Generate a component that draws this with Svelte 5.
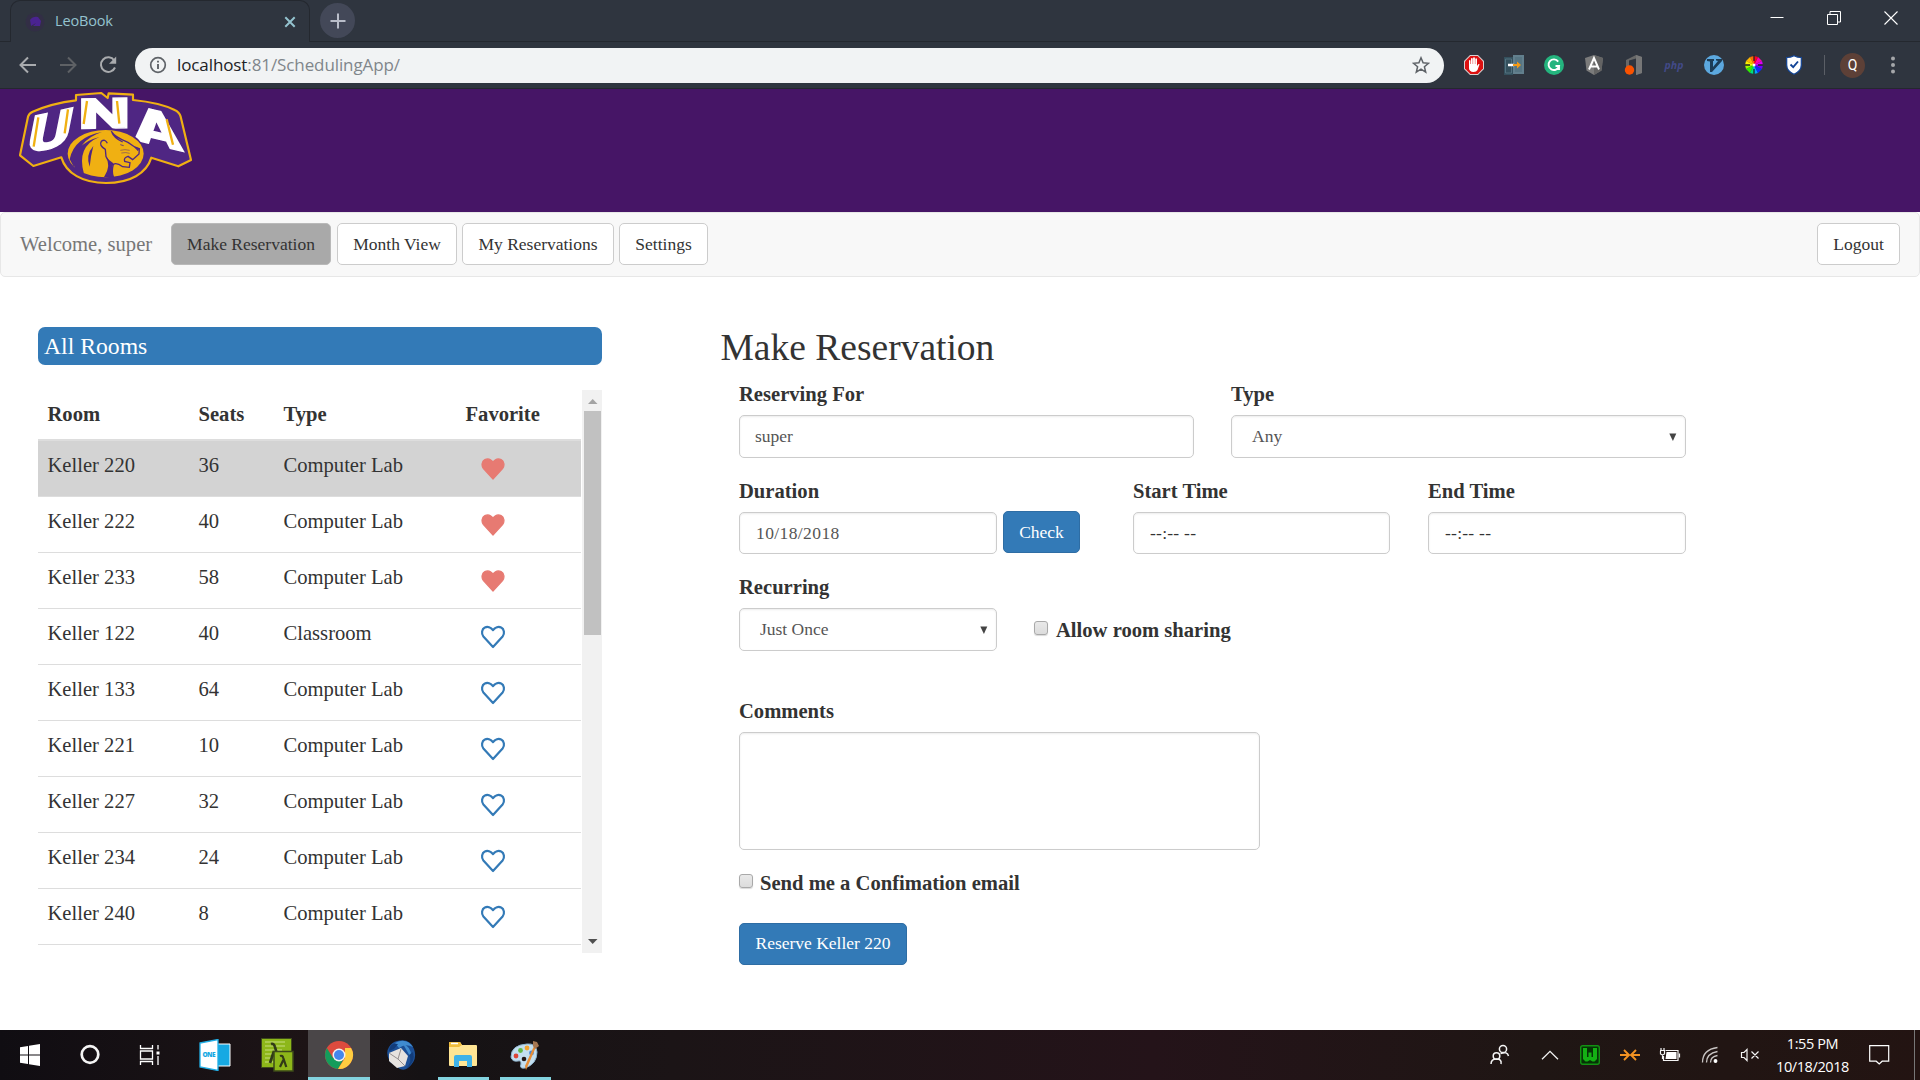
<script>
  const rooms = [
    { name: 'Keller 220', seats: 36, type: 'Computer Lab', fav: true },
    { name: 'Keller 222', seats: 40, type: 'Computer Lab', fav: true },
    { name: 'Keller 233', seats: 58, type: 'Computer Lab', fav: true },
    { name: 'Keller 122', seats: 40, type: 'Classroom', fav: false },
    { name: 'Keller 133', seats: 64, type: 'Computer Lab', fav: false },
    { name: 'Keller 221', seats: 10, type: 'Computer Lab', fav: false },
    { name: 'Keller 227', seats: 32, type: 'Computer Lab', fav: false },
    { name: 'Keller 234', seats: 24, type: 'Computer Lab', fav: false },
    { name: 'Keller 240', seats: 8, type: 'Computer Lab', fav: false }
  ];
  let selected = $state('Keller 220');
</script>

<div class="screen">
  <div class="tabstrip">
    <div class="tab">
      <svg class="favicon" width="20" height="20" viewBox="0 0 20 20"><circle cx="10" cy="10" r="9.500" fill="#37264f" opacity=".4"/><path d="M5 8q3-4 8-3l3 4-1 5H8l3-3-5 3z" fill="#4a2391"/></svg>
      <span class="tabtitle">LeoBook</span>
      <svg class="tabclose" width="12" height="12" viewBox="0 0 12 12"><path d="M1.300 1.300l9.400 9.400M10.700 1.300l-9.400 9.400" stroke="#94c3cf" stroke-width="2"/></svg>
    </div>
    <div class="newtab"><svg width="16" height="16" viewBox="0 0 16 16"><path d="M8 .5v15M.5 8h15" stroke="#b9bdc9" stroke-width="2"/></svg></div>
    <div class="winctl">
      <svg width="14" height="14" viewBox="0 0 14 14"><path d="M.5 6.500h13" stroke="#fff"/></svg>
      <svg width="14" height="14" viewBox="0 0 14 14"><path d="M.5 3.500h10v10h-10zM3 3V.5h10.500v10.500H11" fill="none" stroke="#fff"/></svg>
      <svg width="14" height="14" viewBox="0 0 14 14"><path d="M.5.5l13 13M13.500.5l-13 13" stroke="#fff" stroke-width="1.100"/></svg>
    </div>
  </div>

  <div class="toolbar">
    <div class="navbtn"><svg width="18" height="18" viewBox="0 0 18 18"><path d="M17 9H2M9 1.500L1.500 9l7.500 7.500" fill="none" stroke="#a9abae" stroke-width="2"/></svg></div>
    <div class="navbtn"><svg width="18" height="18" viewBox="0 0 18 18"><path d="M1 9h15M9 1.500L16.500 9 9 16.500" fill="none" stroke="#5e6165" stroke-width="2"/></svg></div>
    <div class="navbtn"><svg width="18" height="18" viewBox="0 0 18 18"><path d="M15.300 4.500A7.300 7.300 0 1 0 16 11.500" fill="none" stroke="#a9abae" stroke-width="2"/><path d="M17.200.5v7.200H10z" fill="#a9abae"/></svg></div>
    <div class="omnibox">
      <svg width="18" height="18" viewBox="0 0 18 18"><circle cx="9" cy="9" r="7.300" fill="none" stroke="#5f6368" stroke-width="1.700"/><path d="M9 8v5M9 4.800v1.800" stroke="#5f6368" stroke-width="1.900"/></svg>
      <span class="url">localhost<i>:81/SchedulingApp/</i></span>
      <svg class="star" width="18" height="18" viewBox="0 0 18 18"><path d="M9 1.800l2.100 5 5.400.5-4.100 3.500 1.300 5.300L9 13.200l-4.700 2.900 1.300-5.300L1.500 7.300l5.400-.5z" fill="none" stroke="#5f6368" stroke-width="1.500"/></svg>
    </div>
    <div class="exts">
      <svg width="20" height="20" viewBox="0 0 20 20"><path d="M6 0h8l6 6v8l-6 6H6l-6-6V6z" fill="#d9d0d0"/><path d="M6.400 1h7.200L19 6.400v7.200L13.600 19H6.400L1 13.600V6.400z" fill="#dc1010"/><path d="M5 10.500V5.500q.8-.8 1.500 0V9h.5V3.500q.8-1 1.700 0V9h.4V2.800q1-1 1.800 0V9h.4V3.700q.9-.9 1.700 0V11l1.500-2q1.200-.3 1 .6L13.500 15Q12.500 17 9.500 17 5 16.700 5 13z" fill="#fff"/></svg>
      <svg width="20" height="20" viewBox="0 0 20 20"><path d="M0 2h9v18H0z" fill="#34505d"/><path d="M1.500 4h6v14h-6z" fill="none" stroke="#52707f"/><path d="M9 0h11v19H9z" fill="#627f8d"/><path d="M11 2h7v15h-7z" fill="#577583"/><path d="M4 10h6" stroke="#fff" stroke-width="2.500"/><path d="M9 9h4V6.500l4 3.500-4 3.500V11H9z" fill="#f39a15"/></svg>
      <svg width="20" height="20" viewBox="0 0 20 20"><circle cx="10" cy="10" r="10" fill="#24b47e"/><path d="M14.200 6.600A5.300 5.300 0 1 0 15 11h-3.500M15 11v4" fill="none" stroke="#fff" stroke-width="1.900"/></svg>
      <svg width="20" height="20" viewBox="0 0 20 20"><path d="M10 0l9 3-1.500 12.500L10 20l-7.500-4.500L1 3z" fill="#7b7b7b"/><path d="M10 0l9 3-1.500 12.500L10 20z" fill="#646464"/><path d="M5 14.500L10 3l5 11.500M6.500 11.500h7" fill="none" stroke="#fff" stroke-width="1.900"/></svg>
      <svg width="20" height="20" viewBox="0 0 20 20"><path d="M2 5l10-5 6 2v16l-6 2V3.500L5 5.500V13H2z" fill="#686868"/><path d="M12 0l6 2v16l-6 2z" fill="#777"/><circle cx="5.500" cy="15" r="4.700" fill="#fa5200"/></svg>
      <span class="php">php</span>
      <svg width="20" height="20" viewBox="0 0 20 20"><circle cx="10" cy="10" r="10" fill="#5ca8df"/><path d="M3 4h7v2L9 6v6l5-6-2-.5V4h6v2L8 17H6V6.500L3 6z" fill="#1c3c56"/></svg>
      <svg width="20" height="20" viewBox="0 0 20 20"><g><path d="M10 10L6 2 10 1z" fill="#ff6b00"/><path d="M10 10L2 6 6 2z" fill="#ffb500"/><path d="M10 10L1 10 2 6z" fill="#fff000"/><path d="M10 10L2 14 1 10z" fill="#a5f500"/><path d="M10 10L6 18 2 14z" fill="#30ed00"/><path d="M10 10L10 19 6 18z" fill="#00e080"/><path d="M10 10L14 18 10 19z" fill="#00a8ff"/><path d="M10 10L18 14 14 18z" fill="#102bff"/><path d="M10 10L19 10 18 14z" fill="#7500ff"/><path d="M10 10L18 6 19 10z" fill="#d900f5"/><path d="M10 10L14 2 18 6z" fill="#ff00b0"/><path d="M10 10L10 1 14 2z" fill="#ff0020"/></g><path d="M10 0v6M10 14v5M1 10h5M14 10h5" stroke="#222" stroke-width="1.300"/><circle cx="10" cy="10" r="1.500" fill="#fff"/></svg>
      <svg width="20" height="20" viewBox="0 0 20 20"><path d="M10 .7q4 2 7.300 1.800V10q0 6-7.300 9.300Q2.700 16 2.700 10V2.500Q6 2.700 10 .7z" fill="#fff" stroke="#124496" stroke-width="1.200"/><path d="M6.500 9.500l2.700 2.700 4.800-5.700" fill="none" stroke="#124496" stroke-width="1.900"/></svg>
    </div>
    <div class="divider"></div>
    <div class="avatar">Q</div>
    <svg class="dots" width="6" height="18" viewBox="0 0 6 18" fill="#a5a7aa"><circle cx="3" cy="2.500" r="2"/><circle cx="3" cy="9" r="2"/><circle cx="3" cy="15.500" r="2"/></svg>
  </div>

  <header class="banner">
    <svg width="180" height="96" viewBox="54 270 540 288">
      <path d="M228 285L304 279L323 294L326 280L399 284V300Q480 308 524 330Q538 336 542 350L573 480L535 499L454 473C440 520 390 549 318 549C248 549 198 520 184 472L100 498L60 466L84 350Q87 340 98 335Q155 310 228 301Z" fill="#4f2683" stroke="#f0b012" stroke-width="6.500" stroke-linejoin="round"/>
      <g class="lettering">
        <text transform="matrix(1 -.22 -.2 1 74 462)" font-size="158" textLength="132" lengthAdjust="spacingAndGlyphs">U</text>
        <text transform="matrix(1 -.02 0 1 235 386)" font-size="126" textLength="156" lengthAdjust="spacingAndGlyphs">N</text>
        <text transform="matrix(1 .24 .12 1 406 420)" font-size="150" textLength="144" lengthAdjust="spacingAndGlyphs">A</text>
      </g>
      <path d="M115 352L101 440M204 328L194 400M261 303L251 372M351 303L358 371M500 358L519 434" fill="none" stroke="#f0b012" stroke-width="7"/>
      <ellipse cx="316" cy="462" rx="120" ry="78" fill="#4f2683"/>
      <ellipse cx="317" cy="461" rx="114" ry="71" fill="#f0b012"/>
      <path d="M209 478Q222 412 306 396Q230 420 222 502ZM223 508Q217 430 298 411Q228 440 252 522ZM269 500Q256 465 280 438Q272 468 269 500Z" fill="#4f2683"/>
      <path d="M322 430Q315 415 304 424Q296 436 316 448L318 470Q337 495 315 530H340Q334 515 340 493Q350 487 368 500L388 502L390 488L374 484Q370 473 384 469L398 479L407 471L417 462L418 446L404 441L384 427Q344 411 334 394Q342 415 368 426" fill="#f0b012" stroke="#4f2683" stroke-width="4"/>
      <path d="M318 470Q336 492 316 530H340Q333 513 340 490Q326 480 318 470Z" fill="#4f2683"/>
      <path d="M361 434l10 3M404 442l12 4-2 6z" fill="#4f2683" stroke="#4f2683" stroke-width="2.500"/>
      <path d="M361 451q14-4 28 0M364 459q14-3 25 1" fill="none" stroke="#4f2683" stroke-width="1.500"/>
    </svg>
  </header>

  <nav class="appnav">
    <span class="welcome">Welcome, super</span>
    <button class="btn active w1">Make Reservation</button>
    <button class="btn w2">Month View</button>
    <button class="btn w3">My Reservations</button>
    <button class="btn w4">Settings</button>
    <button class="btn logout">Logout</button>
  </nav>

  <main>
    <section class="rooms">
      <h3>All Rooms</h3>
      <div class="scroller">
        <div class="table">
          <div class="tr head"><span>Room</span><span>Seats</span><span>Type</span><span>Favorite</span></div>
          {#each rooms as r}
            <!-- svelte-ignore a11y_click_events_have_key_events, a11y_no_static_element_interactions -->
            <div class="tr" class:sel={selected === r.name} onclick={() => (selected = r.name)}>
              <span>{r.name}</span><span>{r.seats}</span><span>{r.type}</span>
              <span class="fav">
                <svg width="26" height="24" viewBox="0 0 26 24">
                  <path class:full={r.fav} d="M13 22L3.400 11.500C1 8.600 1.900 4 4.800 2.600C7.500 1.200 10.900 2.200 13 5.200C15.100 2.200 18.500 1.200 21.200 2.600C24.100 4 25 8.600 22.600 11.500Z" />
                </svg>
              </span>
            </div>
          {/each}
        </div>
        <div class="sbar">
          <svg width="20" height="21" viewBox="0 0 20 21"><path d="M6 14h9.500L10.700 9z" fill="#a3a3a3"/></svg>
          <div class="thumb"></div>
          <svg width="20" height="21" viewBox="0 0 20 21"><path d="M6 7h9.500L10.700 12z" fill="#505050"/></svg>
        </div>
      </div>
    </section>

    <section class="form">
      <h2>Make Reservation</h2>
      <div class="row r1">
        <div class="field wide"><b>Reserving For</b><div class="input">super</div></div>
        <div class="field wide"><b>Type</b><div class="input select">Any<svg width="8" height="8" viewBox="0 0 8 8"><path d="M.3.500h7L3.900 8z" fill="#444"/></svg></div></div>
      </div>
      <div class="row r2">
        <div class="field"><b>Duration</b><div class="input date">10/18/2018</div></div>
        <button class="btn primary check">Check</button>
        <div class="field start"><b>Start Time</b><div class="input time">--:-- --</div></div>
        <div class="field end"><b>End Time</b><div class="input time">--:-- --</div></div>
      </div>
      <div class="row r3">
        <div class="field"><b>Recurring</b><div class="input select once">Just Once<svg width="8" height="8" viewBox="0 0 8 8"><path d="M.3.500h7L3.900 8z" fill="#444"/></svg></div></div>
        <div class="checkline share"><i class="cb"></i><b>Allow room sharing</b></div>
      </div>
      <div class="field comments"><b>Comments</b><div class="area"></div></div>
      <div class="checkline mail"><i class="cb"></i><b>Send me a Confimation email</b></div>
      <button class="btn primary reserve">Reserve {selected}</button>
    </section>
  </main>

  <footer class="taskbar">
    <div class="sys"><svg width="20" height="22" viewBox="0 0 20 22" fill="#fff"><path d="M0 3.200L8 2v8.500H0zM9 1.800L20 0v10.500H9zM0 11.500h8V20l-8-1.200zM9 11.500h11V22L9 20.200z"/></svg></div>
    <div class="sys"><svg width="20" height="22" viewBox="0 0 20 22"><circle cx="10" cy="10.500" r="8.300" fill="none" stroke="#f4f4f4" stroke-width="2.700"/></svg></div>
    <div class="sys"><svg width="22" height="22" viewBox="0 0 22 22" fill="none" stroke="#fff" stroke-width="1.300"><path d="M1.500 1v3.500h12V1M1.500 21v-3.500h12V21M1.500 7h12v8h-12zM19 1v4.500M19 12v9"/><path d="M17.500 7.500h3v3h-3z" fill="#fff" stroke="none"/></svg></div>
    <div class="app first"><svg width="32" height="32" viewBox="0 0 32 32"><path d="M17 5h14v22H17z" fill="#16a9e3" stroke="#fff"/><path d="M1 4L19 .5v31L1 28z" fill="#fff" stroke="#20aee6" stroke-width="1.300"/><text x="3.500" y="18.300" font-family="Open Sans, sans-serif" font-size="6.500" font-weight="800" fill="#16a9e3" textLength="13">ONE</text></svg></div>
    <div class="app"><svg width="34" height="34" viewBox="0 0 34 34"><path d="M1.500.5h30v29h-30z" fill="#8db719" stroke="#3d4a1a"/><path d="M5 4h20M5 8h20M5 12h17M5 16h16M5 20h15M5 24h12" stroke="#b4d25d" stroke-width="1.300"/><path d="M11 6q3-1 4 3l2.500 9M14 13l-4 12" fill="none" stroke="#303a17" stroke-width="2.700"/><path d="M14 13.500h19V33H14z" fill="#8db719" stroke="#3d4a1a" stroke-width="1.500"/><path d="M20 18q2.500-1 3.300 2l3 9M23.300 22L20 29" fill="none" stroke="#303a17" stroke-width="2.200"/></svg></div>
    <div class="app current"><svg width="30" height="30" viewBox="0 0 30 30"><circle cx="15" cy="15" r="14" fill="#dd4b3e"/><path d="M2.900 8A14 14 0 0 0 14 29l6-10.500L15 15 9 18z" fill="#149c5b"/><path d="M27.100 8A14 14 0 0 1 14 29l7-11V8z" fill="#ffcd40"/><circle cx="15" cy="15" r="6.500" fill="#f3f3f3"/><circle cx="15" cy="15" r="5" fill="#4587ed"/></svg></div>
    <div class="app"><svg width="32" height="32" viewBox="0 0 32 32"><path d="M12 2Q25-1 29 10t-6 19q-4 3-8 1L5 23Q0 14 4 8 7 3 12 2z" fill="#1b4f96"/><path d="M10 4Q21-2 28 8 20 4 14 9zM18 5q9 3 8 14" fill="#3f8bd0"/><path d="M4 14L16 9l7 8-3 10-8 2-8-7z" fill="#e6e3df"/><path d="M4 14l9 6 3-10M13 20l7 7" fill="none" stroke="#948f90"/><path d="M4 12Q5 3 13 5L9 10M24 16q4 6-3 14 10-7 7-17" fill="#123c7a"/></svg></div>
    <div class="app running"><svg width="30" height="28" viewBox="0 0 30 28"><path d="M1 2q0-1 1-1h10l2 3h14q1 0 1 1v19q0 1-1 1H2q-1 0-1-1z" fill="#ffe594"/><path d="M1 2q0-1 1-1h10l2 3-3 2H1z" fill="#f0bd3c"/><path d="M3 2.500h7" stroke="#fff" stroke-width="1.500"/><path d="M6 26V16q0-2 2-2h14q2 0 2 2v10h-5v-6h-8v6z" fill="#3fb2e8"/></svg></div>
    <div class="app running"><svg width="30" height="32" viewBox="0 0 30 32"><path d="M17 5Q26 4 27 13 27 25 15 29q-6 1-4-4 0-4-3-3-6 1-7-4Q1 6 17 5z" fill="#c3dff0" stroke="#8fb5ce"/><circle cx="14" cy="20" r="2.300" fill="#241715"/><circle cx="6" cy="17" r="2.400" fill="#dd4638"/><circle cx="10.500" cy="11.500" r="2.400" fill="#62b945"/><circle cx="17" cy="9" r="2.400" fill="#f3a431"/><circle cx="21.500" cy="14" r="2.400" fill="#4b87d6"/><path d="M24 7l2 1-10 23-1-4z" fill="#e78e37"/><path d="M23 2l4 1 2 4-4 3-2-3z" fill="#a57752"/></svg></div>

    <div class="tray">
      <div class="cell"><svg width="20" height="22" viewBox="0 0 20 22" fill="none" stroke="#f4f4f4" stroke-width="1.500"><circle cx="13" cy="5" r="3.600"/><circle cx="6.500" cy="12" r="3.300"/><path d="M1 20q0-5 5.500-5t4.500 5M10.500 9.500q7-2.500 8 2.500"/></svg></div>
      <div class="gap10"></div>
      <div class="cell"><svg width="18" height="10" viewBox="0 0 18 10"><path d="M1 9.300L9 1.300l8 8" fill="none" stroke="#f4f4f4" stroke-width="1.300"/></svg></div>
      <div class="cell"><svg width="20" height="20" viewBox="0 0 20 20"><rect x=".7" y=".7" width="18.600" height="18.600" rx="2" fill="#063306" stroke="#139113" stroke-width="1.400"/><path d="M3 3h4v9h1.500V7.500h3V12H13V3h4v11l-2.500 2.500h-2L10 15l-2.500 1.500h-2L3 14z" fill="#14b014"/></svg></div>
      <div class="cell"><svg width="20" height="14" viewBox="0 0 20 14"><path d="M0 7h9M11 7h9M4 2l5 5-5 5M16 2l-5 5 5 5" fill="none" stroke="#f39222" stroke-width="1.900"/></svg></div>
      <div class="cell"><svg width="22" height="16" viewBox="0 0 22 16"><path d="M6.500 3.500H19v10H4.500V9M20.500 6.500v4" fill="none" stroke="#f4f4f4" stroke-width="1.200"/><path d="M7.500 5h10v7H6.500z" fill="#fff"/><path d="M1 3.500h5M2 1v2M5 1v2M1.500 4v3l2 1 2-1V4M3.500 8v4" fill="none" stroke="#f4f4f4" stroke-width="1.200"/></svg></div>
      <div class="cell"><svg width="18" height="18" viewBox="0 0 18 18" fill="none" stroke="#c9c5c4" stroke-width="1.300"><path d="M1.500 16.500q0-13 15-15M5.500 16.500q0-9 11-11M9.500 16.500q0-6 7-7"/><circle cx="14.500" cy="15" r="1.300" fill="#fff" stroke="#fff"/></svg></div>
      <div class="cell mute"><svg width="20" height="14" viewBox="0 0 20 14" fill="none" stroke="#f4f4f4" stroke-width="1.200"><path d="M1.500 4.500H4L7 1.500v11L4 9.500H1.500zM11.500 3.500l7 7M18.500 3.500l-7 7"/></svg></div>
      <div class="clock"><span class="t">1:55 PM</span><span class="d">10/18/2018</span></div>
      <svg class="note" width="21" height="20" viewBox="0 0 21 20"><path d="M.7.700h19v15.500h-6.500L10.200 19l-3-2.800H.7z" fill="none" stroke="#fff" stroke-width="1.200"/></svg>
    </div>
    <div class="peek"></div>
  </footer>
</div>

<style>
  :global(body) { margin: 0; background: #fff; }
  :global(*) { box-sizing: border-box; }
  .screen { width: 1920px; height: 1080px; overflow: hidden; display: flex; flex-direction: column; background: #fff; color: #333; font-family: "Liberation Serif", "Times New Roman", serif; white-space: nowrap; }
  svg { display: block; flex: none; }

  .tabstrip { height: 42px; background: #2f353f; border-bottom: 1px solid #24282f; display: flex; flex: none; }
  .tab { width: 300px; margin-left: 10px; height: 42px; border: 1px solid #24282f; border-bottom: 0; border-radius: 10px 10px 0 0; background: #2f353f; display: flex; align-items: center; padding: 0 13px 0 14px; }
  .tabtitle { font: 14.5px/20px "Open Sans", sans-serif; color: #94c3cf; margin: -2px 0 0 10px; letter-spacing: -.15px; flex: 1; }
  .newtab { width: 35px; height: 35px; margin: 3px 0 0 10px; border-radius: 50%; background: #434858; display: flex; align-items: center; justify-content: center; }
  .winctl { margin-left: auto; display: flex; gap: 43px; padding: 11px 22px 0 0; }

  .toolbar { height: 47px; background: #2f353f; border-bottom: 1px solid #24282f; display: flex; align-items: center; padding-left: 8px; flex: none; }
  .navbtn { width: 40px; display: flex; justify-content: center; }
  .omnibox { margin-left: 7px; width: 1309px; height: 35px; border-radius: 18px; background: #f1f3f4; display: flex; align-items: center; padding: 0 14px; }
  .url { font: 17px/24px "Open Sans", sans-serif; color: #202124; margin: -1px 0 0 10px; letter-spacing: -.1px; }
  .url i { font-style: normal; color: #80868b; }
  .star { margin-left: auto; }
  .exts { display: flex; align-items: center; gap: 20px; margin-left: 20px; }
  .php { width: 20px; font: italic 700 10.500px/20px "Open Sans", sans-serif; color: #424a88; text-align: center; }
  .divider { width: 1px; height: 20px; background: #5b5f66; margin-left: 20px; }
  .avatar { width: 25px; height: 25px; border-radius: 50%; background: #5d4037; color: #fff; font: 14px/25px Roboto, sans-serif; text-align: center; margin-left: 15px; }
  .dots { margin-left: 25px; }

  .banner { height: 123px; background: #461566; padding: 1px 0 0 18px; flex: none; }
  .lettering { font-family: Roboto, "Liberation Sans", sans-serif; font-weight: 900; fill: #fff; stroke: #fff; stroke-width: 4; }

  .appnav { height: 65px; border: 1px solid #e7e7e7; border-radius: 5px; background: #f8f8f8; display: flex; align-items: flex-start; padding: 10px 19px 0; flex: none; }
  .welcome { font-size: 20.6px; line-height: 43px; color: #777; width: 151px; }
  .btn { height: 42px; border: 1px solid #ccc; border-radius: 5px; background: #fff; color: #333; font: 17.5px/25px "Liberation Serif", serif; padding: 0; flex: none; }
  .active { background: #a9a9a9; border-color: #b9b9b9; }
  .w1 { width: 160px; }
  .w2 { width: 120px; margin-left: 6px; }
  .w3 { width: 152px; margin-left: 5px; }
  .w4 { width: 89px; margin-left: 5px; }
  .logout { width: 83px; margin-left: auto; }
  .primary { background: #337ab7; border-color: #2e6da4; color: #fff; }

  main { flex: 1; display: flex; padding: 50px 0 0 38px; }
  .rooms { width: 564px; flex: none; }
  .rooms h3 { margin: 0 0 25px; height: 38px; border-radius: 7px; background: #337ab7; color: #fff; font-size: 23.7px; line-height: 38px; font-weight: 400; padding-left: 6px; }
  .scroller { display: flex; justify-content: space-between; height: 563px; }
  .table { width: 543px; font-size: 20.6px; line-height: 29px; }
  .tr { display: grid; grid-template-columns: 151px 85px 182px 1fr; padding: 10px 0 0 9.500px; height: 56px; border-bottom: 1px solid #ddd; }
  .head { height: 51px; border-bottom-width: 2px; font-weight: 700; }
  .sel { background: #d3d3d3; }
  .fav { padding: 6px 0 0 14.500px; }
  .fav path { fill: none; stroke: #337ab7; stroke-width: 2.200; stroke-linejoin: round; }
  .fav path.full { fill: #e77a72; stroke: #e77a72; stroke-width: 1.200; }
  .sbar { width: 20px; background: #f1f1f1; display: flex; flex-direction: column; }
  .thumb { width: 17px; height: 224px; background: #c1c1c1; margin: 0 0 auto 2px; }

  .form { margin-left: 118.500px; width: 966px; }
  h2 { margin: 0 0 12px; font-size: 37.5px; line-height: 41px; font-weight: 400; }
  .row { display: flex; margin-left: 18.500px; }
  .field { width: 258px; flex: none; }
  .wide { width: 455px; }
  .r1 { gap: 37px; height: 96px; }
  .r2 { height: 97px; align-items: flex-start; }
  .r2 b { padding-top: 1px; line-height: 28px; }
  .r3 { height: 124px; }
  b { display: block; font-size: 20.6px; line-height: 29px; font-weight: 700; }
  .input { margin-top: 6px; height: 43px; border: 1px solid #ccc; border-radius: 5px; box-shadow: inset 0 1px 2px rgba(0,0,0,.08); color: #555; font-size: 17.5px; line-height: 41px; padding: 0 15px; display: flex; align-items: center; }
  .select { padding: 0 8px 0 20px; justify-content: space-between; }
  .once { padding-left: 20px; }
  .date { height: 42px; margin-top: 7px; padding-left: 16px; letter-spacing: .4px; }
  .time { height: 42px; margin-top: 7px; padding-left: 16px; color: #333; letter-spacing: .25px; }
  .check { width: 77px; margin: 35px 53px 0 6px; }
  .start { width: 257px; }
  .end { margin-left: 38px; }
  .checkline { display: flex; }
  .cb { width: 14px; height: 14px; border: 1px solid #a9a9a9; border-radius: 3px; background: linear-gradient(#e9e9e9, #dcdcdc); box-shadow: 0 1px 1px rgba(0,0,0,.15); flex: none; margin-top: 6px; }
  .share { margin: 42px 0 0 37px; }
  .share b { margin: 1px 0 0 8px; }
  .comments { margin-left: 18.500px; }
  .area { width: 521px; height: 118px; margin-top: 6px; border: 1px solid #ccc; border-radius: 5px; box-shadow: inset 0 1px 2px rgba(0,0,0,.08); }
  .mail { margin: 18px 0 0 18.500px; }
  .mail b { margin: 1px 0 0 7px; }
  .reserve { display: block; width: 168px; margin: 25px 0 0 18.500px; padding-bottom: 2px; }

  .taskbar { height: 50px; flex: none; background: linear-gradient(90deg, #100d12, #1d1416 16%, #151214 22%, #1b1416 35%, #241319 60%, #1f1614 80%, #231412); display: flex; }
  .sys, .app, .cell { display: flex; align-items: center; justify-content: center; }
  .sys { width: 60px; }
  .app { width: 62px; }
  .first { margin-left: 4px; }
  .current { background: #4a4648; border-bottom: 3px solid #83d3df; padding-top: 3px; }
  .running { background: linear-gradient(#83d3df, #83d3df) 50% 100% / 51px 3px no-repeat; }
  .tray { margin-left: auto; display: flex; align-items: center; }
  .cell { width: 40px; }
  .mute { padding-right: 1px; }
  .gap10 { width: 10px; }
  .clock { width: 85px; display: flex; flex-direction: column; align-items: center; font: 14.500px/23px "Open Sans", sans-serif; color: #fff; letter-spacing: -.4px; }
  .note { margin: 0 24px 0 14px; }
  .peek { width: 6px; border-left: 1px solid #777; }
</style>
